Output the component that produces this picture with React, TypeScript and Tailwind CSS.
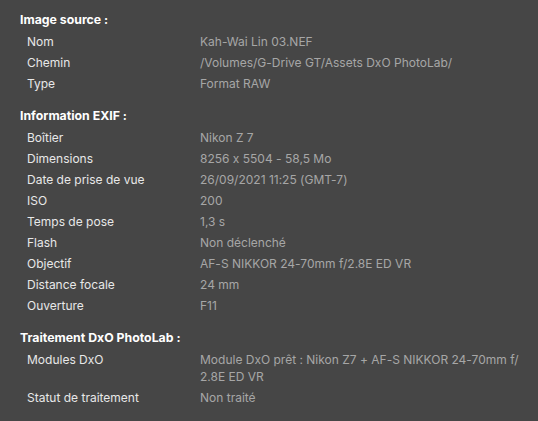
import React from "react";

type Row = [string, React.ReactNode];

const sections: { title: string; rows: Row[] }[] = [
  {
    title: "Image source :",
    rows: [
      ["Nom", "Kah-Wai Lin 03.NEF"],
      ["Chemin", "/Volumes/G-Drive GT/Assets DxO PhotoLab/"],
      ["Type", "Format RAW"],
    ],
  },
  {
    title: "Information EXIF :",
    rows: [
      ["Boîtier", "Nikon Z 7"],
      ["Dimensions", "8256 x 5504 - 58,5 Mo"],
      ["Date de prise de vue", "26/09/2021 11:25 (GMT-7)"],
      ["ISO", "200"],
      ["Temps de pose", "1,3 s"],
      ["Flash", "Non déclenché"],
      ["Objectif", "AF-S NIKKOR 24-70mm f/2.8E ED VR"],
      ["Distance focale", "24 mm"],
      ["Ouverture", "F11"],
    ],
  },
  {
    title: "Traitement DxO PhotoLab :",
    rows: [
      [
        "Modules DxO",
        <>
          Module DxO prêt : Nikon Z7 + AF-S NIKKOR 24-70mm f/
          <br />
          2.8E ED VR
        </>,
      ],
      ["Statut de traitement", "Non traité"],
    ],
  },
];

export default function App() {
  return (
    <div
      className="w-[538px] h-[421px] bg-[#464646] pt-[11px] pl-[20px] overflow-hidden text-[12px]"
      style={{ fontFamily: "Inter, 'Liberation Sans', sans-serif", fontFeatureSettings: '"calt" 0' }}
    >
      <div className="flex flex-col gap-[15px]">
        {sections.map((s) => (
          <div key={s.title} className="flex flex-col gap-[4px]">
            <div className="font-bold text-white text-[12.3px] leading-[17px] mb-[1px]">{s.title}</div>
            {s.rows.map(([k, v]) => (
              <div key={k} className="flex leading-[17px]">
                <div className="w-[180px] shrink-0 pl-[7px] text-[#e8e8e8]">{k}</div>
                <div className="w-[330px] whitespace-nowrap text-[#a6a6a6]">{v}</div>
              </div>
            ))}
          </div>
        ))}
      </div>
    </div>
  );
}
